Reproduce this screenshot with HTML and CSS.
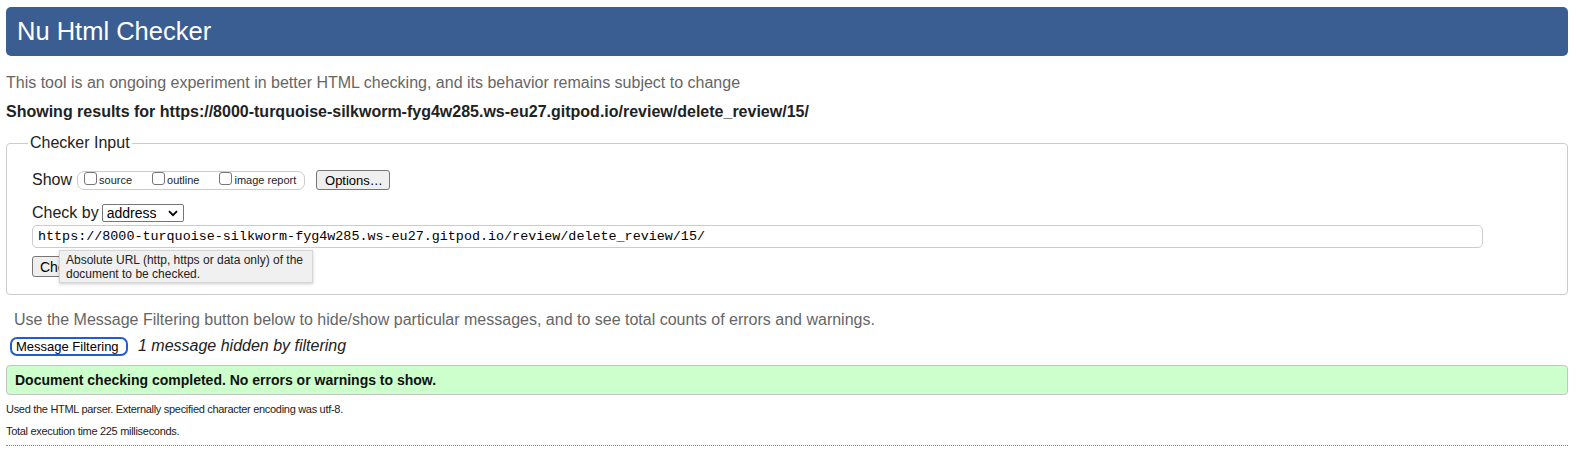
FILE: index.html
```html
<!DOCTYPE html>
<html lang="en">
<head>
<meta charset="utf-8">
<title>Nu Html Checker</title>
<link rel="stylesheet" href="styles.css">
</head>
<body>
<div class="page">
  <h1 class="banner">Nu Html Checker</h1>
  <p class="tagline">This tool is an ongoing experiment in better HTML checking, and its behavior remains subject to change</p>
  <p class="showing">Showing results for https://8000-turquoise-silkworm-fyg4w285.ws-eu27.gitpod.io/review/delete_review/15/</p>

  <fieldset class="checker">
    <legend class="legend">Checker Input</legend>
    <div class="row row-show">
      <span class="label">Show</span>
      <span class="opts">
        <label class="opt"><span class="cb"></span>source</label>
        <label class="opt"><span class="cb"></span>outline</label>
        <label class="opt"><span class="cb"></span>image report</label>
      </span>
      <span class="btn btn-options">Options…</span>
    </div>
    <div class="row row-by">
      <span class="label">Check by</span>
      <span class="select">address<svg class="chev" viewBox="0 0 10 7" width="10" height="7"><path d="M1 1.2 L5 5.2 L9 1.2" fill="none" stroke="#000" stroke-width="1.8"/></svg></span>
    </div>
    <div class="url">https://8000-turquoise-silkworm-fyg4w285.ws-eu27.gitpod.io/review/delete_review/15/</div>
    <div class="row row-submit">
      <span class="btn btn-check">Check</span>
      <div class="tooltip">Absolute URL (http, https or data only) of the<br>document to be checked.</div>
    </div>
  </fieldset>

  <p class="filter-note">Use the Message Filtering button below to hide/show particular messages, and to see total counts of errors and warnings.</p>
  <div class="filter-row">
    <span class="btn-filter">Message Filtering</span>
    <em class="hidden-count">1 message hidden by filtering</em>
  </div>
  <div class="success">Document checking completed. No errors or warnings to show.</div>
  <p class="details">Used the HTML parser. Externally specified character encoding was utf-8.</p>
  <p class="details">Total execution time 225 milliseconds.</p>
  <hr class="dotted">
</div>
</body>
</html>
```

FILE: styles.css
```css
html, body {
  margin: 0;
  padding: 0;
  background: #fff;
}
body {
  font-family: "Liberation Sans", Arial, sans-serif;
  color: #222;
}
.page {
  padding: 7px 8px 0 6px;
}
.banner {
  margin: 0;
  height: 49px;
  background: #3a5d92;
  border-radius: 5px;
  color: #fff;
  font-weight: normal;
  font-size: 25.5px;
  display: flex;
  align-items: center;
  padding-left: 11px;
}
.tagline {
  margin: 17px 0 0;
  font-size: 16px;
  line-height: 20px;
  color: #666;
}
.showing {
  margin: 9px 0 0;
  font-size: 16px;
  line-height: 20px;
  font-weight: bold;
  color: #222;
}
.checker {
  margin: 11px 0 0;
  border: 1px solid #ccc;
  border-radius: 4px;
  padding: 16px 84px 17px 25px;
  min-width: 0;
}
.legend {
  font-size: 16px;
  line-height: 20px;
  padding: 0 2px;
  margin-left: -4px;
  color: #222;
}
.row {
  display: flex;
  align-items: center;
}
.label {
  font-size: 16px;
  color: #222;
}
.row-show {
  height: 22px;
}
.opts {
  display: flex;
  align-items: center;
  margin-left: 5px;
  height: 17px;
  border: 1px solid #ccc;
  border-radius: 7px;
  padding: 0 6px;
  width: 214px;
  box-sizing: content-box;
}
.opt {
  display: flex;
  align-items: center;
  font-size: 11px;
  color: #222;
  margin-right: 20px;
}
.opt:last-child {
  margin-right: 0;
}
.cb {
  display: inline-block;
  width: 11px;
  height: 11px;
  border: 1px solid #767676;
  border-radius: 3px;
  margin-right: 2px;
  position: relative;
  top: -2px;
}
.btn {
  display: inline-flex;
  align-items: center;
  background: #efefef;
  border: 1px solid #767676;
  border-radius: 3px;
  font-size: 13px;
  color: #000;
  box-sizing: border-box;
}
.btn-options {
  margin-left: 11px;
  height: 20px;
  width: 74px;
  padding-left: 8px;
}
.row-by {
  height: 22px;
  margin-top: 11px;
}
.select {
  margin-left: 3px;
  display: inline-flex;
  align-items: center;
  justify-content: space-between;
  width: 82px;
  height: 18px;
  box-sizing: border-box;
  border: 1px solid #767676;
  border-radius: 2px;
  background: #fff;
  font-size: 14px;
  padding: 0 5px 0 4px;
  color: #000;
}
.url {
  margin-top: 1px;
  height: 23px;
  box-sizing: border-box;
  border: 1px solid #ccc;
  border-radius: 5px;
  font-family: "Liberation Mono", "Courier New", monospace;
  font-size: 13.4px;
  line-height: 21px;
  padding-left: 5px;
  color: #000;
}
.row-submit {
  position: relative;
  margin-top: 8px;
  height: 21px;
}
.btn-check {
  height: 21px;
  padding: 0 7px;
  font-size: 14px;
}
.tooltip {
  position: absolute;
  left: 27px;
  top: -6px;
  width: 254px;
  height: 33px;
  box-sizing: border-box;
  background: #f0f0f0;
  border: 1px solid #d6d6d6;
  box-shadow: 0 1px 3px rgba(0,0,0,0.2);
  font-size: 12px;
  line-height: 14px;
  padding: 2px 6px;
  color: #222;
}
.filter-note {
  margin: 15px 0 0;
  padding-left: 8px;
  font-size: 16px;
  line-height: 20px;
  color: #666;
}
.filter-row {
  display: flex;
  align-items: center;
  height: 20px;
  margin-top: 6px;
  padding-left: 4px;
}
.btn-filter {
  display: inline-flex;
  align-items: center;
  height: 19px;
  box-sizing: border-box;
  border: 2px solid #1d5fd0;
  border-radius: 7px;
  font-size: 13px;
  padding: 0 4px;
  width: 118px;
  color: #000;
  background: #fff;
}
.hidden-count {
  margin-left: 10px;
  font-size: 16px;
  color: #222;
}
.success {
  margin-top: 9px;
  height: 30px;
  box-sizing: border-box;
  background: #ccffcc;
  border: 1px solid #c4c4c4;
  border-radius: 4px;
  font-size: 14px;
  font-weight: bold;
  line-height: 28px;
  padding-left: 8px;
  color: #111;
}
.details {
  margin: 6px 0 0;
  font-size: 11px;
  letter-spacing: -0.3px;
  line-height: 16px;
  color: #222;
}
.details + .details {
  margin-top: 6px;
}
.dotted {
  margin: 6px 0 0;
  border: 0;
  border-top: 1px dotted #888;
  height: 0;
}
```
